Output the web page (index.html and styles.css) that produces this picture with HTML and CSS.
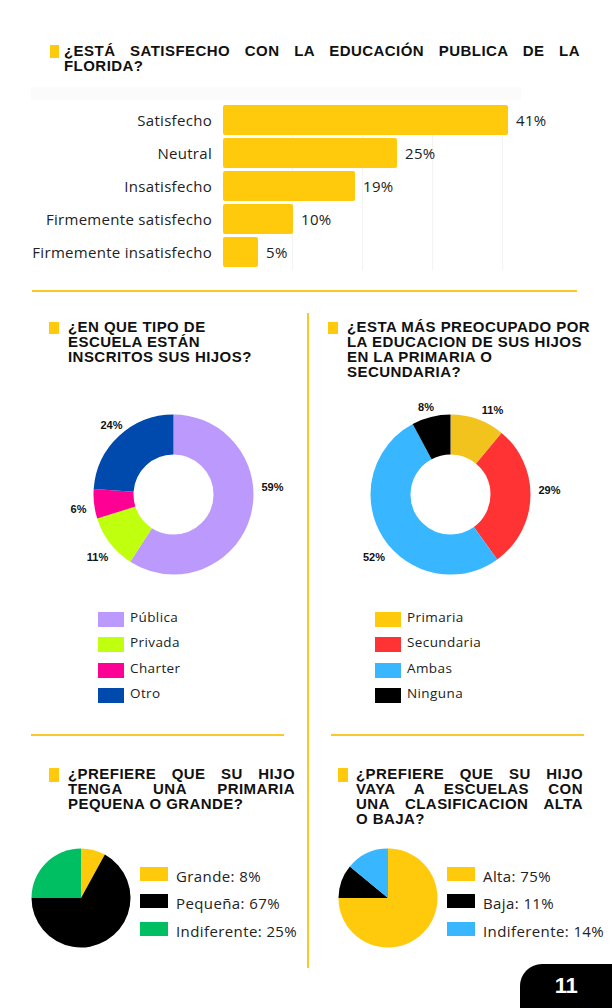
FILE: index.html
```html
<!DOCTYPE html>
<html lang="es">
<head>
<meta charset="utf-8">
<title>Encuesta sobre la educación en la Florida</title>
<link rel="stylesheet" href="styles.css">
</head>
<body>
<main class="page">
  <section class="top">
    <h2 class="q q-top">
      <span class="mark"></span>
      <span class="q-text">
        <span class="ln just">¿ESTÁ SATISFECHO CON LA EDUCACIÓN PUBLICA DE LA</span>
        <span class="ln">FLORIDA?</span>
      </span>
    </h2>
    <div class="chart">
      <div class="band"></div>
      <div class="rows">
        <div class="lbl">Satisfecho</div>
        <div class="plot"><span class="bar" style="width:285px"></span><span class="pct">41%</span></div>
        <div class="lbl">Neutral</div>
        <div class="plot"><span class="bar" style="width:174px"></span><span class="pct">25%</span></div>
        <div class="lbl">Insatisfecho</div>
        <div class="plot"><span class="bar" style="width:132px"></span><span class="pct">19%</span></div>
        <div class="lbl">Firmemente satisfecho</div>
        <div class="plot"><span class="bar" style="width:70px"></span><span class="pct">10%</span></div>
        <div class="lbl">Firmemente insatisfecho</div>
        <div class="plot"><span class="bar" style="width:35px"></span><span class="pct">5%</span></div>
      </div>
    </div>
  </section>

  <hr class="rule-wide">

  <div class="grid">
    <section class="cell cell-mid cell-l">
      <h2 class="q q-mid">
        <span class="mark"></span>
        <span class="q-text">
          <span class="ln">¿EN QUE TIPO DE</span>
          <span class="ln">ESCUELA ESTÁN</span>
          <span class="ln">INSCRITOS SUS HIJOS?</span>
        </span>
      </h2>
      <svg class="donut" width="307" height="200" viewBox="0 0 307 200">
        <g transform="rotate(-90 173.5 99.5)" fill="none" stroke-width="40">
          <circle cx="173.5" cy="99.5" r="60" stroke="#BC9AFD" stroke-dasharray="222.42 400" stroke-dashoffset="0"/>
          <circle cx="173.5" cy="99.5" r="60" stroke="#C0FF0E" stroke-dasharray="41.47 400" stroke-dashoffset="-222.42"/>
          <circle cx="173.5" cy="99.5" r="60" stroke="#FF0095" stroke-dasharray="22.62 400" stroke-dashoffset="-263.89"/>
          <circle cx="173.5" cy="99.5" r="60" stroke="#004AAD" stroke-dasharray="90.48 400" stroke-dashoffset="-286.51"/>
        </g>
        <text class="dl" x="111.5" y="30">24%</text>
        <text class="dl" x="272.5" y="92">59%</text>
        <text class="dl" x="78.5" y="114">6%</text>
        <text class="dl" x="97.5" y="162">11%</text>
      </svg>
      <ul class="legend">
        <li><span class="sw" style="background:#BC9AFD"></span><span class="tx">Pública</span></li>
        <li><span class="sw" style="background:#C0FF0E"></span><span class="tx">Privada</span></li>
        <li><span class="sw" style="background:#FF0095"></span><span class="tx">Charter</span></li>
        <li><span class="sw" style="background:#004AAD"></span><span class="tx">Otro</span></li>
      </ul>
      <div class="cell-rule"></div>
    </section>

    <div class="vline"></div>

    <section class="cell cell-mid cell-r">
      <h2 class="q q-mid">
        <span class="mark"></span>
        <span class="q-text">
          <span class="ln">¿ESTA MÁS PREOCUPADO POR</span>
          <span class="ln">LA EDUCACION DE SUS HIJOS</span>
          <span class="ln">EN LA PRIMARIA O</span>
          <span class="ln">SECUNDARIA?</span>
        </span>
      </h2>
      <svg class="donut" width="303" height="200" viewBox="0 0 303 200">
        <g transform="rotate(-90 141.5 99.5)" fill="none" stroke-width="40">
          <circle cx="141.5" cy="99.5" r="60" stroke="#F1C31C" stroke-dasharray="41.47 400" stroke-dashoffset="0"/>
          <circle cx="141.5" cy="99.5" r="60" stroke="#FF3333" stroke-dasharray="109.33 400" stroke-dashoffset="-41.47"/>
          <circle cx="141.5" cy="99.5" r="60" stroke="#38B6FF" stroke-dasharray="196.04 400" stroke-dashoffset="-150.8"/>
          <circle cx="141.5" cy="99.5" r="60" stroke="#000000" stroke-dasharray="30.16 400" stroke-dashoffset="-346.83"/>
        </g>
        <text class="dl" x="117" y="12">8%</text>
        <text class="dl" x="183.5" y="15">11%</text>
        <text class="dl" x="240.5" y="95">29%</text>
        <text class="dl" x="65" y="162">52%</text>
      </svg>
      <ul class="legend">
        <li><span class="sw" style="background:#FFC90C"></span><span class="tx">Primaria</span></li>
        <li><span class="sw" style="background:#FF3333"></span><span class="tx">Secundaria</span></li>
        <li><span class="sw" style="background:#38B6FF"></span><span class="tx">Ambas</span></li>
        <li><span class="sw" style="background:#000000"></span><span class="tx">Ninguna</span></li>
      </ul>
      <div class="cell-rule"></div>
    </section>

    <section class="cell cell-low cell-l">
      <h2 class="q q-low">
        <span class="mark"></span>
        <span class="q-text">
          <span class="ln just">¿PREFIERE QUE SU HIJO</span>
          <span class="ln just">TENGA UNA PRIMARIA</span>
          <span class="ln">PEQUENA O GRANDE?</span>
        </span>
      </h2>
      <div class="pierow">
        <svg class="pie" width="100" height="100" viewBox="0 0 100 100">
          <path fill="#FFC90C" d="M50 50 L50 0.5 A49.5 49.5 0 0 1 73.85 6.62 Z"/>
          <path fill="#000000" d="M50 50 L73.85 6.62 A49.5 49.5 0 1 1 0.5 50 Z"/>
          <path fill="#00BF63" d="M50 50 L0.5 50 A49.5 49.5 0 0 1 50 0.5 Z"/>
        </svg>
        <ul class="legend2">
          <li><span class="sw2" style="background:#FFC90C"></span><span class="tx">Grande: 8%</span></li>
          <li><span class="sw2" style="background:#000000"></span><span class="tx">Pequeña: 67%</span></li>
          <li><span class="sw2" style="background:#00BF63"></span><span class="tx">Indiferente: 25%</span></li>
        </ul>
      </div>
    </section>

    <section class="cell cell-low cell-r">
      <h2 class="q q-low">
        <span class="mark"></span>
        <span class="q-text">
          <span class="ln just">¿PREFIERE QUE SU HIJO</span>
          <span class="ln just">VAYA A ESCUELAS CON</span>
          <span class="ln just">UNA CLASIFICACION ALTA</span>
          <span class="ln">O BAJA?</span>
        </span>
      </h2>
      <div class="pierow">
        <svg class="pie" width="100" height="100" viewBox="0 0 100 100">
          <path fill="#FFC90C" d="M50 50 L50 0.5 A49.5 49.5 0 1 1 0.5 50 Z"/>
          <path fill="#000000" d="M50 50 L0.5 50 A49.5 49.5 0 0 1 11.86 18.45 Z"/>
          <path fill="#38B6FF" d="M50 50 L11.86 18.45 A49.5 49.5 0 0 1 50 0.5 Z"/>
        </svg>
        <ul class="legend2">
          <li><span class="sw2" style="background:#FFC90C"></span><span class="tx">Alta: 75%</span></li>
          <li><span class="sw2" style="background:#000000"></span><span class="tx">Baja: 11%</span></li>
          <li><span class="sw2" style="background:#38B6FF"></span><span class="tx">Indiferente: 14%</span></li>
        </ul>
      </div>
    </section>
  </div>

  <div class="pageno">11</div>
</main>
</body>
</html>
```

FILE: styles.css
```css
* { box-sizing: border-box; }

html, body {
  margin: 0;
  padding: 0;
  background: #ffffff;
}

body {
  font-family: "Open Sans", "Liberation Sans", sans-serif;
  color: #222222;
}

.page {
  position: relative;
  width: 612px;
  height: 1008px;
  overflow: hidden;
  padding-top: 43px;
}

/* ---------- question headings ---------- */
.q {
  display: flex;
  align-items: flex-start;
  margin: 0;
  font-family: "Liberation Sans", Arial, sans-serif;
  font-weight: 700;
  font-size: 15px;
  letter-spacing: 0.45px;
  color: #111111;
}

.mark {
  flex: none;
  width: 10px;
  height: 13px;
  margin-top: 2px;
  background: #FFC90C;
}

.q-text { display: block; }

.ln {
  display: block;
  white-space: nowrap;
}

.ln.just {
  text-align: justify;
  text-align-last: justify;
}

.q-top {
  margin-left: 50px;
  gap: 5px;
  line-height: 15.3px;
}
.q-top .mark { width: 9px; }
.q-top .q-text { width: 516px; }

.q-mid {
  gap: 9px;
  line-height: 15.3px;
  height: 76px;
}
.q-mid .mark { height: 12px; margin-top: 3px; }

.q-low {
  gap: 9px;
  line-height: 15px;
  height: 82px;
}
.q-low .q-text { width: 227px; }
.q-low .mark { height: 14px; margin-top: 2px; }

/* ---------- bar chart ---------- */
.chart {
  margin: 13px 0 0 31px;
  width: 490px;
}

.band {
  height: 13px;
  margin-bottom: 5px;
  background: #fbfbfb;
}

.rows {
  display: grid;
  grid-template-columns: 181px 298px;
  grid-auto-rows: 33px;
  column-gap: 11px;
}

.lbl {
  text-align: right;
  font-size: 15px;
  letter-spacing: 0.3px;
  line-height: 30px;
  white-space: nowrap;
  color: #222222;
}

.plot {
  display: flex;
  align-items: flex-start;
  background-image: repeating-linear-gradient(to right, transparent 0, transparent 69px, #f3f3f3 69px, #f3f3f3 70px);
}

.bar {
  display: block;
  flex: none;
  height: 30px;
  background: #FFC90C;
  border-radius: 2px;
}

.pct {
  flex: none;
  margin-left: 8px;
  font-size: 15px;
  letter-spacing: 0.3px;
  line-height: 30px;
  white-space: nowrap;
  color: #222222;
}

.rule-wide {
  display: block;
  border: 0;
  width: 545px;
  height: 2px;
  margin: 20px 0 21px 32px;
  background: #FBC82A;
}

/* ---------- lower grid ---------- */
.grid {
  display: grid;
  grid-template-columns: 307px 2px 303px;
  grid-template-rows: 423px 232px;
}

.vline {
  grid-column: 2;
  grid-row: 1 / 3;
  background: #FBC82A;
}

.cell {
  display: flex;
  flex-direction: column;
}

.cell-mid { padding-top: 6px; grid-row: 1; }
.cell-low { padding-top: 30px; grid-row: 2; }
.cell-l { grid-column: 1; }
.cell-r { grid-column: 3; }

.cell-mid.cell-l .q { margin-left: 49px; }
.cell-mid.cell-r .q { margin-left: 19px; }
.cell-low.cell-l .q { margin-left: 49px; }
.cell-low.cell-r .q { margin-left: 29px; gap: 8px; }

.donut { display: block; }

.dl {
  font-family: "Liberation Sans", Arial, sans-serif;
  font-weight: 700;
  font-size: 11px;
  fill: #111111;
  text-anchor: middle;
  dominant-baseline: central;
}

.legend {
  list-style: none;
  margin: 17px 0 0;
  padding: 0;
  display: flex;
  flex-direction: column;
  gap: 10.5px;
}

.cell-l .legend { margin-left: 98px; }
.cell-r .legend { margin-left: 66px; }

.legend li {
  display: flex;
  align-items: center;
  gap: 6px;
  height: 15px;
  font-size: 13.5px;
  letter-spacing: 0.4px;
  color: #222222;
}

.sw {
  flex: none;
  width: 26px;
  height: 15px;
}

.legend .tx {
  line-height: 15px;
  margin-bottom: 4px;
}

.cell-rule {
  margin-top: auto;
  width: 253px;
  height: 2px;
  background: #FBC82A;
}
.cell-l .cell-rule { margin-left: 31px; }
.cell-r .cell-rule { margin-left: 22px; }

.pierow {
  display: flex;
  align-items: flex-start;
}

.pie {
  display: block;
  flex: none;
}
.cell-l .pie { margin-left: 31px; }
.cell-r .pie { margin-left: 29px; }

.legend2 {
  list-style: none;
  margin: 19px 0 0 9px;
  padding: 0;
  display: flex;
  flex-direction: column;
  gap: 13.5px;
}

.legend2 li {
  display: flex;
  align-items: center;
  gap: 8px;
  height: 14px;
  font-size: 15px;
  letter-spacing: 0.4px;
  white-space: nowrap;
  color: #222222;
}

.sw2 {
  flex: none;
  width: 28px;
  height: 14px;
}

.legend2 .tx {
  line-height: 16px;
  margin-top: 4px;
}

/* ---------- page number tab ---------- */
.pageno {
  position: absolute;
  right: 0;
  bottom: 0;
  width: 92px;
  height: 44px;
  border-top-left-radius: 22px;
  background: #000000;
  color: #ffffff;
  font-family: "Liberation Sans", Arial, sans-serif;
  font-weight: 700;
  font-size: 22px;
  letter-spacing: -0.5px;
  display: flex;
  align-items: center;
  justify-content: center;
}
```
